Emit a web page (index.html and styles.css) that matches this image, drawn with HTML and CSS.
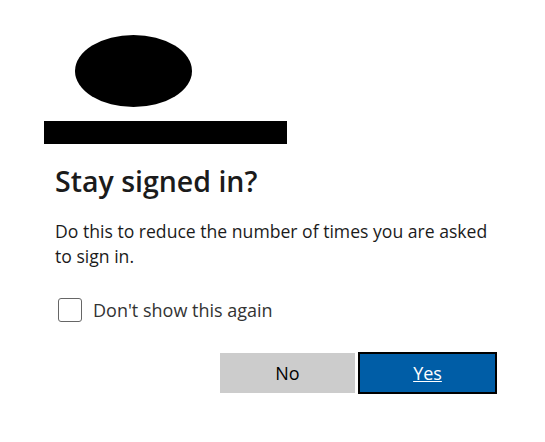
FILE: index.html
```html
<!DOCTYPE html>
<html>
<head>
<meta charset="utf-8">
<link rel="stylesheet" href="styles.css">
</head>
<body>
<div class="page">
  <div class="logo"></div>
  <div class="account"></div>
  <div class="content">
    <h1 class="title">Stay signed in?</h1>
    <p class="desc">Do this to reduce the number of times you are asked to sign in.</p>
    <label class="check">
      <span class="box"></span>
      <span class="check-label">Don't show this again</span>
    </label>
    <div class="actions">
      <button class="btn btn-no">No</button>
      <button class="btn btn-yes"><span class="yes-text">Yes</span></button>
    </div>
  </div>
</div>
</body>
</html>
```
FILE: styles.css
```css
html, body {
  margin: 0;
  padding: 0;
  background: #ffffff;
}
body {
  font-family: "Open Sans", "Noto Sans", sans-serif;
  color: #1b1b1b;
}
.page {
  padding: 35px 0 0 44px;
  width: 453px;
}
.logo {
  width: 117px;
  height: 72px;
  border-radius: 50%;
  background: #000;
  margin-left: 31px;
}
.account {
  width: 243px;
  height: 23px;
  background: #000;
  margin-top: 14px;
}
.content {
  padding-left: 11px;
}
.title {
  margin: 19px 0 0;
  font-size: 28.5px;
  line-height: 36px;
  font-weight: 600;
  color: #1b1b1b;
}
.desc {
  margin: 20px 0 0;
  font-size: 17.6px;
  line-height: 25px;
  width: 442px;
}
.check {
  display: flex;
  align-items: center;
  margin-top: 29px;
  margin-left: 3px;
}
.box {
  width: 22px;
  height: 22px;
  border: 1px solid #666;
  border-radius: 3px;
  flex: none;
}
.check-label {
  margin-left: 11px;
  font-size: 18px;
  line-height: 24px;
  color: #333;
}
.actions {
  display: flex;
  justify-content: flex-end;
  align-items: center;
  gap: 3px;
  margin-top: 30px;
}
.btn {
  font-family: inherit;
  font-size: 18px;
  border: none;
  padding: 0;
  cursor: pointer;
}
.btn-no {
  width: 135px;
  height: 40px;
  background: #cccccc;
  color: #000;
}
.btn-yes {
  width: 139px;
  height: 42px;
  background: #005da6;
  border: 2px solid #000;
  color: #fff;
}
.yes-text {
  text-decoration: underline;
}
```
